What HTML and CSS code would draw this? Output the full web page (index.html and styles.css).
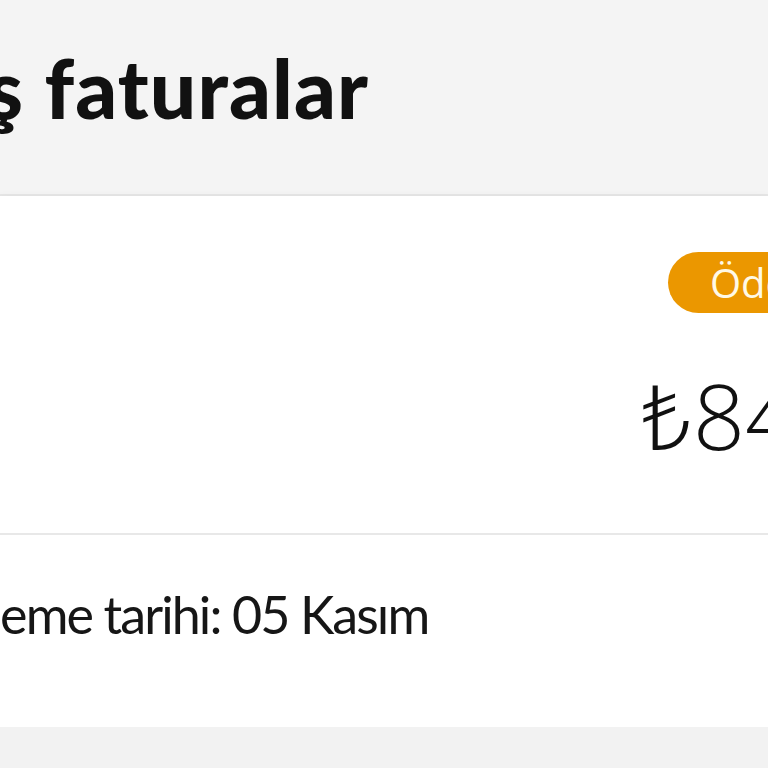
FILE: index.html
```html
<!DOCTYPE html>
<html lang="tr">
<head>
<meta charset="utf-8">
<link rel="stylesheet" href="styles.css">
</head>
<body>
<div class="page">
  <header class="header">
    <h1 class="title">Geçmiş faturalar</h1>
  </header>
  <section class="card">
    <div class="card-top">
      <div class="card-side">
        <span class="badge">Ödendi</span>
        <div class="amount">₺84,90</div>
      </div>
    </div>
    <div class="card-bottom">
      <p class="due">Son ödeme tarihi: 05 Kasım</p>
    </div>
  </section>
</div>
</body>
</html>
```

FILE: styles.css
```css
html, body {
  margin: 0;
  padding: 0;
  width: 768px;
  height: 768px;
  overflow: hidden;
  background: #f2f2f2;
}
.page {
  width: 768px;
  overflow: hidden;
}
.header {
  height: 194px;
  background: #f4f4f4;
  border-bottom: 2px solid #e6e6e6;
  overflow: hidden;
  white-space: nowrap;
}
.title {
  margin: 0;
  padding-top: 42px;
  margin-left: -252px;
  font-family: Lato, "Noto Sans", sans-serif;
  font-weight: 900;
  font-size: 82px;
  line-height: 90px;
  color: #111111;
  letter-spacing: 1.1px;
}
.card {
  background: #ffffff;
  box-shadow: 0 6px 12px rgba(0, 0, 0, 0.12);
}
.card-top {
  height: 337px;
  border-bottom: 2px solid #e8e8e8;
  overflow: hidden;
  white-space: nowrap;
}
.card-side {
  padding-left: 644px;
  padding-top: 56px;
  display: flex;
  flex-direction: column;
  align-items: flex-start;
}
.badge {
  margin-left: 24px;
  height: 61px;
  line-height: 61px;
  padding: 0 42px;
  border-radius: 31px;
  background: #eb9700;
  color: #fff9e6;
  font-family: "Open Sans", "Noto Sans", sans-serif;
  font-size: 40px;
}
.amount {
  margin-top: 52px;
  margin-left: -3px;
  font-family: "Open Sans", "Noto Sans", sans-serif;
  font-weight: 300;
  font-size: 91px;
  line-height: 100px;
  color: #111111;
}
.card-bottom {
  height: 192px;
  overflow: hidden;
  white-space: nowrap;
}
.due {
  margin: 0;
  padding-top: 47px;
  margin-left: -147px;
  font-family: Lato, "Noto Sans", sans-serif;
  font-size: 52px;
  line-height: 64px;
  letter-spacing: -1.9px;
  color: #161616;
}
```
